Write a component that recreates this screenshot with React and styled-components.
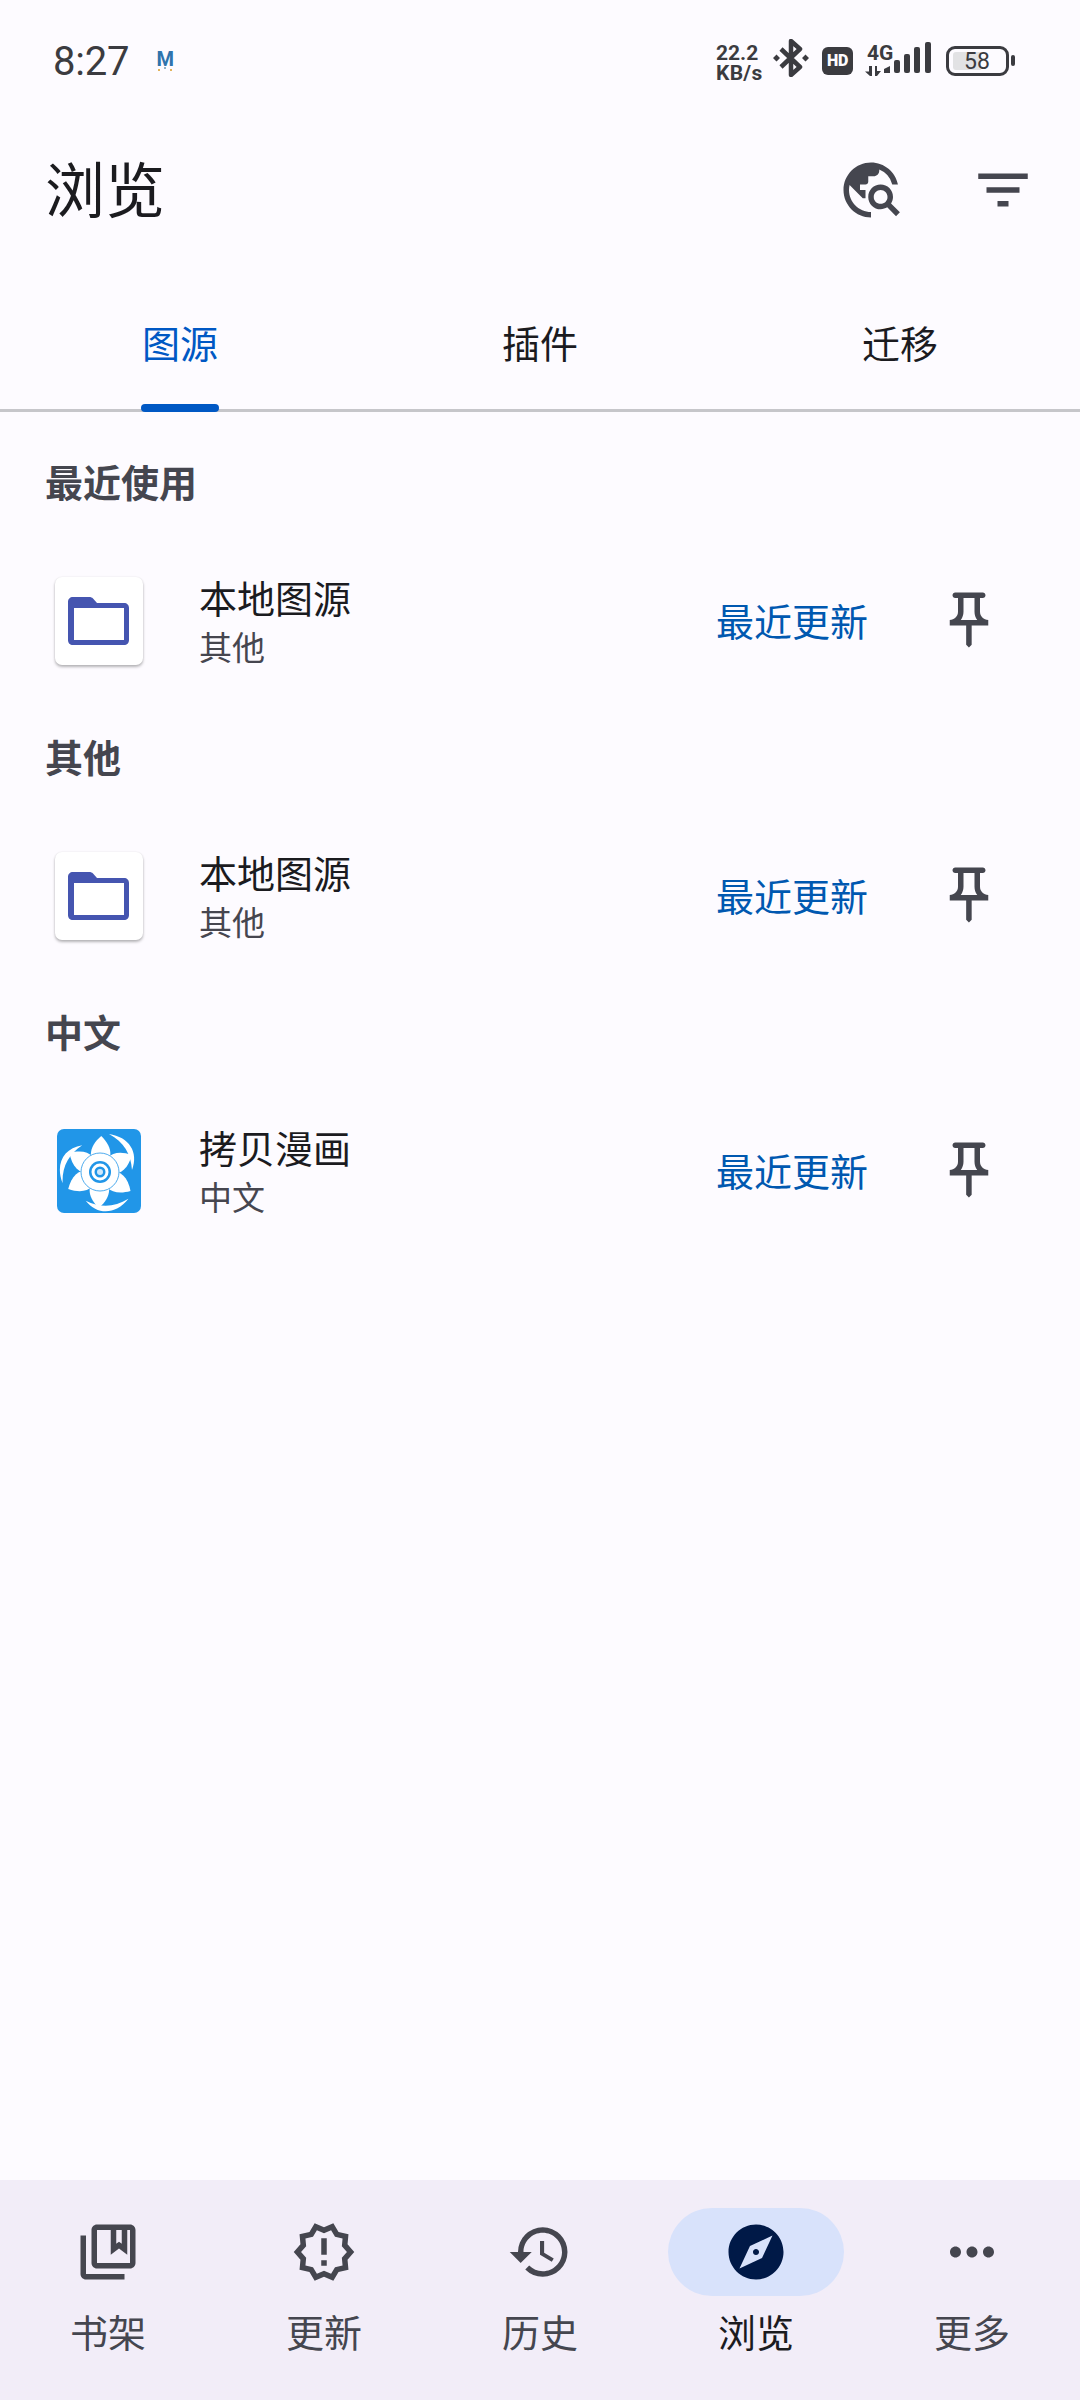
import React from "react";
import styled, { createGlobalStyle } from "styled-components";
import {
  MdOutlineCollectionsBookmark,
  MdOutlineNewReleases,
  MdHistory,
  MdExplore,
  MdMoreHoriz,
  MdOutlineTravelExplore,
  MdFilterList,
  MdOutlinePushPin,
} from "react-icons/md";

const Global = createGlobalStyle`
  html, body { margin: 0; padding: 0; background: #fdfbff; }
  * { box-sizing: border-box; }
`;
const cjk = `"Noto Sans CJK SC", "Noto Sans", sans-serif`;

const Page = styled.div`
  width: 1080px; height: 2400px; background: #fdfbff; display: flex; flex-direction: column;
  font-family: ${cjk}; overflow: hidden;
`;
const StatusBar = styled.div`
  height: 100px; padding: 42px 0 0 53px; display: flex; align-items: flex-start; color: #3b3b40;
  font-family: Roboto, sans-serif;
`;
const Clock = styled.div`font-size: 40px; line-height: 39px; letter-spacing: -.2px;`;
const NotifyMark = styled.div`
  margin: 9px 0 0 26px; font-size: 20px; line-height: 17px; font-weight: 700; color: #2f74ad; width: 20px; text-align: center;
  position: relative;
  &::after {
    content: ""; position: absolute; left: 3px; top: 18px; width: 2px; height: 2px; background: #e2b35a;
    box-shadow: 6px -2px 0 #8fb3c9, 12px 0 0 #e2b35a;
  }
`;
const StatusRight = styled.div`margin-left: auto; display: flex; align-items: flex-start; padding-right: 65px;`;
const Speed = styled.div`
  display: flex; flex-direction: column; font-weight: 700; width: 50px; margin-top: 2px;
  span { display: block; }
`;
const SpeedValue = styled.span`font-size: 21px; line-height: 19px;`;
const SpeedUnit = styled.span`font-size: 21px; line-height: 20px; letter-spacing: .3px;`;
const HdBadge = styled.div`
  width: 31px; height: 28px; margin: 5px 0 0 13px; border-radius: 6px; background: #3b3b40; color: #fdfbff;
  font-size: 16px; line-height: 28px; font-weight: 900; text-align: center; letter-spacing: -.3px;
`;
const Network = styled.div`margin-left: 12px; display: flex; flex-direction: column; width: 19px; `;
const NetLabel = styled.div`font-size: 21px; line-height: 18px; font-weight: 700; width: 30px; margin: 2px 0 0 2px;`;
const Battery = styled.div`
  margin: 4px 0 0 14px; width: 63px; height: 30px; border: 3px solid #3b3b40; border-radius: 9px; padding: 3px 4px;
  position: relative;
`;
const BatteryFill = styled.div`
  height: 100%; border-radius: 3px; background: linear-gradient(90deg, #e2e2e4 0, #e2e2e4 58%, transparent 58%);
  font-size: 23px; line-height: 19px; text-align: center; color: #3b3b40; padding-right: 1px;
`;
const BatteryTip = styled.div`width: 4px; height: 11px; background: #3b3b40; border-radius: 2px; margin: 13px 0 0 2px;`;

const Toolbar = styled.div`height: 180px; display: flex; align-items: center; padding: 0 44px 0 45px;`;
const Title = styled.h1`margin: 0 0 7px; font-size: 60px; font-weight: 400; color: #1b1b1f; line-height: 80px;`;
const ToolIcons = styled.div`margin-left: auto; display: flex; gap: 66px; color: #45464f; align-items: center;`;

const Tabs = styled.div`height: 132px; display: flex; border-bottom: 3px solid #c6c6ca; margin-bottom: 11px;`;
const Tab = styled.div`
  flex: 1; display: flex; align-items: center; justify-content: center; position: relative; font-size: 38px; padding-bottom: 6px;
  color: ${(p) => (p.$active ? "#0058c4" : "#1b1b1f")};
`;
const TabMark = styled.div`
  position: absolute; left: 50%; bottom: -3px; transform: translateX(-50%); width: 78px; height: 8px; border-radius: 4px; background: #0058c4;
`;

const SectionHead = styled.div`
  height: 121px; display: flex; align-items: center; padding: 0 0 7px 45px; font-size: 38px; font-weight: 700; color: #45464f;
`;
const Row = styled.div`height: 154px; display: flex; align-items: center; padding: 0 78px 0 55px;`;
const IconCard = styled.div`
  width: 88px; height: 88px; flex: none; border-radius: 7px; display: flex; align-items: center; justify-content: center;
  background: ${(p) => (p.$plain ? "transparent" : "#fff")};
  box-shadow: ${(p) => (p.$plain ? "none" : "0 2px 3px rgba(0,0,0,.28), 0 0 2px rgba(0,0,0,.08)")};
`;
const RowText = styled.div`margin-left: 56px; display: flex; flex-direction: column;`;
const RowTitle = styled.div`font-size: 38px; line-height: 48px; color: #1b1b1f;`;
const RowSub = styled.div`font-size: 33px; line-height: 48px; color: #46464f; margin-top: 1px;`;
const Latest = styled.div`margin: 0 68px 3px auto; font-size: 38px; color: #0058b0; line-height: 50px;`;
const Pin = styled.div`color: #45464f; display: flex; margin-bottom: 2px;`;

const Spacer = styled.div`flex: 1;`;
const Nav = styled.div`height: 220px; background: #f2edf8; display: flex; padding-top: 28px;`;
const NavItem = styled.div`flex: 1; display: flex; flex-direction: column; align-items: center; color: #45464f;`;
const NavPill = styled.div`
  width: 176px; height: 88px; border-radius: 44px; display: flex; align-items: center; justify-content: center;
  background: ${(p) => (p.$active ? "#d8e2fb" : "transparent")};
  color: ${(p) => (p.$active ? "#001947" : "#45464f")};
`;
const NavLabel = styled.div`
  margin-top: 10px; font-size: 38px; line-height: 50px; color: ${(p) => (p.$active ? "#1b1b1f" : "#45464f")};
`;

const Bluetooth = () => (
  <svg width="36" height="38" viewBox="0 0 36 38" style={{ margin: "-3px 0 0 7px" }} fill="none">
    <path d="M8 10 L27 28 L18 36 V2 L27 10 L8 28" stroke="#3b3b40" strokeWidth="4.500" strokeLinejoin="round" />
    <path d="M3.500 15.500 7 19 3.500 22.500 0 19zM32.500 15.500 36 19 32.500 22.500 29 19z" fill="#3b3b40" />
  </svg>
);
const NetArrows = () => (
  <svg width="18" height="12" viewBox="0 0 18 12" style={{ marginTop: 3 }}>
    <path d="M7 1v10H5L0 6.500 4 6.500V1zM10 1h2v5h4l-4 5h-2z" fill="#3b3b40" />
  </svg>
);
const SignalBars = () => (
  <svg width="48" height="31" viewBox="0 0 48 31" fill="#3b3b40">
    <path d="M0 27l6-3v7H0z" />
    <rect x="10" y="18" width="6" height="13" rx="2" />
    <rect x="20" y="12" width="6" height="19" rx="2" />
    <rect x="30" y="5" width="6" height="26" rx="2" />
    <rect x="41" y="0" width="6" height="31" rx="2" />
  </svg>
);
const Folder = () => (
  <svg width="88" height="88" viewBox="0 0 88 88">
    <path
      fillRule="evenodd"
      fill="#4555b0"
      d="M18 20h16c2 0 3 .5 4 1.500L42 26h27c3 0 5 2 5 5v32c0 3-2 5-5 5H18c-3 0-5-2-5-5V25c0-3 2-5 5-5zM19 31v32h50V31z"
    />
  </svg>
);
const Logo = () => (
  <svg width="84" height="84" viewBox="0 0 84 84">
    <rect width="84" height="84" rx="7" fill="#2196e8" />
    <g transform="translate(43 43)">
      {[0, 60, 120, 180, 240, 300].map((a) => (
        <path key={a} transform={`rotate(${a + 2})`} d="M0 -36 C13 -24 13 -12 0 0 C-13 -12 -13 -24 0 -36Z" fill="#fff" />
      ))}
      {[0, 120, 240].map((a) => (
        <path key={a} transform={`rotate(${a})`} d="M9 -38 C29 -35 39 -20 32 -2 C31 -18 24 -30 9 -38Z" fill="#fff" />
      ))}
      <circle r="19" fill="none" stroke="#2196e8" strokeWidth=".8" />
      <circle r="11" fill="#2196e8" />
      <circle r="8.500" fill="#fff" />
      <circle r="5.500" fill="#2196e8" />
      <circle r="3" fill="#cfe8fb" />
    </g>
  </svg>
);

const sections = [
  { head: "最近使用", title: "本地图源", sub: "其他", logo: false },
  { head: "其他", title: "本地图源", sub: "其他", logo: false },
  { head: "中文", title: "拷贝漫画", sub: "中文", logo: true },
];
const nav = [
  { label: "书架", Icon: MdOutlineCollectionsBookmark },
  { label: "更新", Icon: MdOutlineNewReleases },
  { label: "历史", Icon: MdHistory },
  { label: "浏览", Icon: MdExplore, active: true },
  { label: "更多", Icon: MdMoreHoriz },
];

export default function App() {
  return (
    <Page>
      <Global />
      <StatusBar>
        <Clock>8:27</Clock>
        <NotifyMark>M</NotifyMark>
        <StatusRight>
          <Speed>
            <SpeedValue>22.2</SpeedValue>
            <SpeedUnit>KB/s</SpeedUnit>
          </Speed>
          <Bluetooth />
          <HdBadge>HD</HdBadge>
          <Network>
            <NetLabel>4G</NetLabel>
            <NetArrows />
          </Network>
          <SignalBars />
          <Battery>
            <BatteryFill>58</BatteryFill>
          </Battery>
          <BatteryTip />
        </StatusRight>
      </StatusBar>
      <Toolbar>
        <Title>浏览</Title>
        <ToolIcons>
          <MdOutlineTravelExplore size={66} />
          <MdFilterList size={66} />
        </ToolIcons>
      </Toolbar>
      <Tabs>
        <Tab $active>图源<TabMark /></Tab>
        <Tab>插件</Tab>
        <Tab>迁移</Tab>
      </Tabs>
      {sections.map((s) => (
        <div key={s.head}>
          <SectionHead>{s.head}</SectionHead>
          <Row>
            <IconCard $plain={s.logo}>{s.logo ? <Logo /> : <Folder />}</IconCard>
            <RowText>
              <RowTitle>{s.title}</RowTitle>
              <RowSub>{s.sub}</RowSub>
            </RowText>
            <Latest>最近更新</Latest>
            <Pin><MdOutlinePushPin size={66} /></Pin>
          </Row>
        </div>
      ))}
      <Spacer />
      <Nav>
        {nav.map(({ label, Icon, active }) => (
          <NavItem key={label}>
            <NavPill $active={active}><Icon size={66} /></NavPill>
            <NavLabel $active={active}>{label}</NavLabel>
          </NavItem>
        ))}
      </Nav>
    </Page>
  );
}
